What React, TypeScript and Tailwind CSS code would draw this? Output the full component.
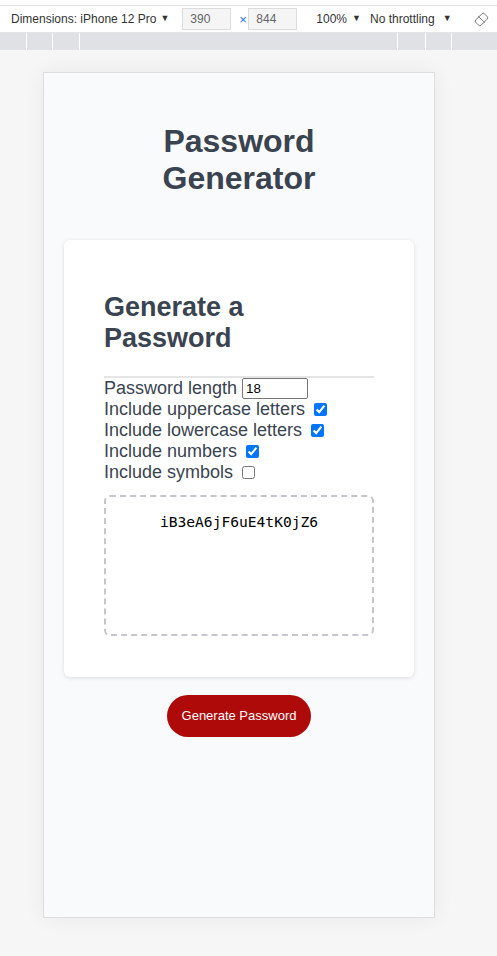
import React from "react";

function Caret({ cls }: { cls: string }) {
  return <span className={"text-[9px] text-[#333] shrink-0 " + cls}>▼</span>;
}

function Check({ checked }: { checked: boolean }) {
  return (
    <input
      type="checkbox"
      checked={checked}
      readOnly
      className="w-[13px] h-[13px] ml-[9px] mr-[3px] accent-[#0075ff]"
    />
  );
}

export default function App() {
  return (
    <div className="w-[497px] h-[956px] bg-[#f5f6f5] flex flex-col overflow-hidden font-['Liberation_Sans',Arial,sans-serif]">
      {/* devtools toolbar */}
      <div className="h-[5px] bg-white" />
      <div className="h-[28px] bg-white border-t border-b border-[#e4e4e4] flex items-center whitespace-nowrap text-[12px] text-[#333] font-['Liberation_Sans',Arial,sans-serif]">
        <span className="ml-[11px] shrink-0">Dimensions: iPhone 12 Pro</span>
        <Caret cls="ml-[4px]" />
        <div className="ml-[13px] shrink-0 w-[49px] h-[22px] border border-[#dcdcdc] bg-[#f5f5f5] flex items-center pl-[7px] text-[#666]">390</div>
        <span className="ml-[8px] w-[9px] shrink-0 text-[#1a73e8] text-[13px] mt-[2px]">×</span>
        <div className="shrink-0 w-[49px] h-[22px] border border-[#dcdcdc] bg-[#f5f5f5] flex items-center pl-[7px] text-[#666]">844</div>
        <span className="ml-[19px] shrink-0">100%</span>
        <Caret cls="ml-[5px]" />
        <span className="ml-[9px] shrink-0">No throttling</span>
        <Caret cls="ml-[8px]" />
        <svg className="ml-[22px] shrink-0" width="15" height="15" viewBox="0 0 16 16" fill="none" stroke="#777" strokeWidth="1">
          <rect x="4" y="1.5" width="8" height="13" rx="2" transform="rotate(45 8 8)" />
          <line x1="4.5" y1="4.5" x2="11.5" y2="11.5" />
        </svg>
      </div>
      {/* ruler */}
      <div className="h-[17px] bg-[#dfe1e5] flex">
        <div className="w-[27px] border-r border-white" />
        <div className="w-[26px] border-r border-white" />
        <div className="w-[27px] border-r border-white" />
        <div className="w-[318px] border-r border-white" />
        <div className="w-[28px] border-r border-white" />
        <div className="w-[26px] border-r border-white" />
      </div>

      {/* device */}
      <div className="mt-[22px] ml-[43px] w-[392px] h-[846px] border border-[#dcdde0] bg-[#f9fafb] shadow-[0_0_20px_rgba(0,0,0,0.06)] flex flex-col">
        <h1 className="mt-[50px] text-center text-[32px] leading-[37px] font-bold text-[#3a4350]">
          Password
          <br />
          Generator
        </h1>
        <div className="mt-[43px] mx-[20px] bg-white rounded-[6px] shadow-[0_1px_4px_rgba(0,0,0,0.12)] px-[40px] pt-[52px] pb-[41px]">
          <h2 className="text-[27px] leading-[31px] font-bold text-[#3a4350]">
            Generate a
            <br />
            Password
          </h2>
          <div className="mt-[22px] h-[2px] bg-[#e5e5e5]" />
          <div className="text-[18px] text-[#3a4350]">
            <div className="h-[21px] flex items-center">
              <span>Password length</span>
              <input
                type="text"
                value="18"
                readOnly
                className="ml-[5px] w-[66px] h-[21px] border border-[#767676] rounded-[2px] px-[3px] text-[13.33px] text-black font-['Liberation_Sans',Arial,sans-serif] bg-white"
              />
            </div>
            <div className="h-[21px] flex items-center">
              <span>Include uppercase letters</span>
              <Check checked />
            </div>
            <div className="h-[21px] flex items-center">
              <span>Include lowercase letters</span>
              <Check checked />
            </div>
            <div className="h-[21px] flex items-center">
              <span>Include numbers</span>
              <Check checked />
            </div>
            <div className="h-[21px] flex items-center">
              <span>Include symbols</span>
              <Check checked={false} />
            </div>
          </div>
          <div className="mt-[12px] h-[141px] border-2 border-dashed border-[#c3c6cc] rounded-[6px] pt-[16px] text-center text-[14.6px] leading-[18px] text-black font-['DejaVu_Sans_Mono',monospace]">
            iB3eA6jF6uE4tK0jZ6
          </div>
        </div>
        <div className="mt-[18px] flex justify-center">
          <button className="h-[42px] px-[15px] rounded-full bg-[#ae0a0a] text-white text-[13px] font-['Liberation_Sans',Arial,sans-serif]">
            Generate Password
          </button>
        </div>
      </div>
    </div>
  );
}
